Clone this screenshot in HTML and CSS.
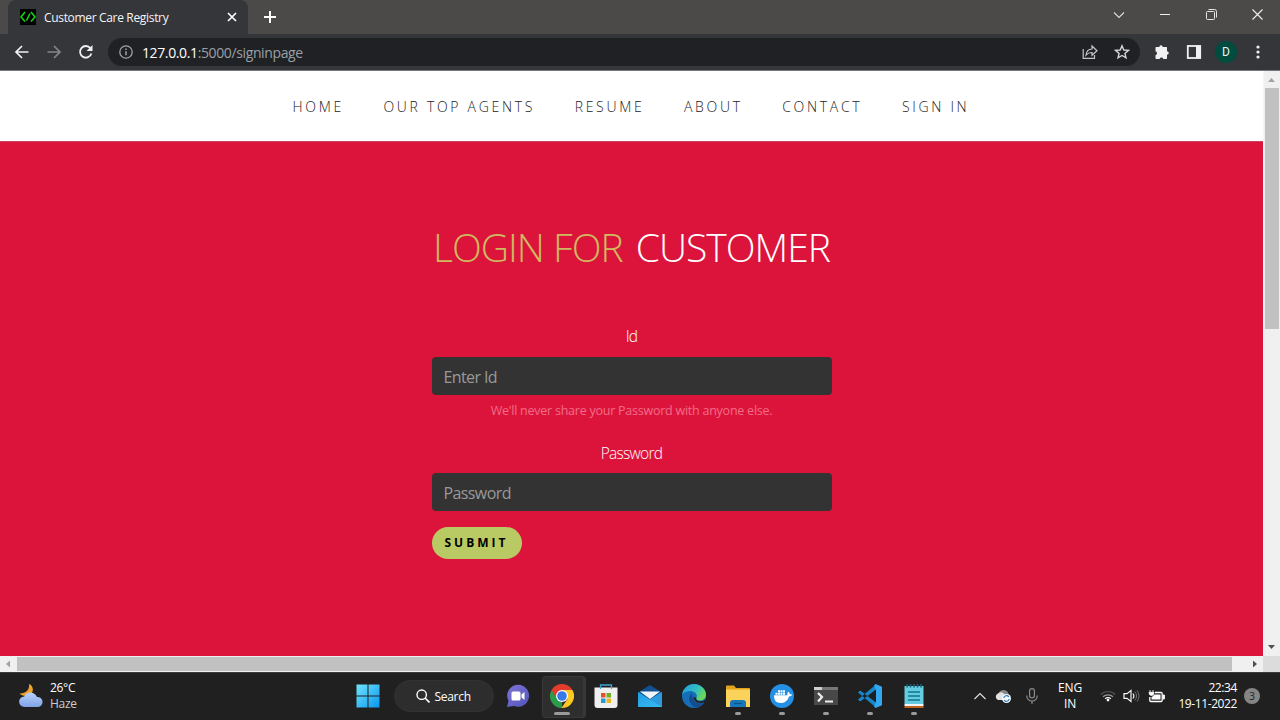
FILE: index.html
```html
<!DOCTYPE html>
<html lang="en">
<head>
<meta charset="utf-8">
<title>Customer Care Registry</title>
<link rel="stylesheet" href="styles.css">
</head>
<body>
<div class="screen">
  <header class="titlebar">
    <div class="tab">
      <svg class="favicon" width="16" height="16" viewBox="0 0 16 16"><rect width="16" height="16" fill="#000"/><path d="M5 3 1 8 5 12.500M11 3 15 8 11 12.500M10 4.500 6.500 11.500" fill="none" stroke="#12d612" stroke-width="1.600"/></svg>
      <span class="tab-title">Customer Care Registry</span>
      <svg class="tab-close" width="10" height="10" viewBox="0 0 10 10"><path d="m1 1 8 8M9 1 1 9" stroke="#fff" stroke-width="1.7"/></svg>
    </div>
    <svg class="new-tab" width="14" height="14" viewBox="0 0 14 14"><path d="M7 1v12M1 7h12" stroke="#fff" stroke-width="2"/></svg>
    <div class="controls">
      <span><svg width="12" height="8" viewBox="0 0 12 8"><path d="m1 1.500 5 5 5-5" fill="none" stroke="#dcdcdb" stroke-width="1.100"/></svg></span>
      <span><svg width="10" height="10" viewBox="0 0 10 10"><path d="M0 4.500h10" stroke="#eee"/></svg></span>
      <span><svg width="11" height="11" viewBox="0 0 11 11"><g fill="none" stroke="#e4e4e4"><rect x=".5" y="2.500" width="8" height="8" rx="1"/><path d="M2.500.5h6a2 2 0 0 1 2 2v6"/></g></svg></span>
      <span><svg width="11" height="11" viewBox="0 0 11 11"><path d="m.5.5 10 10M10.500.5l-10 10" stroke="#eee" stroke-width="1.100"/></svg></span>
    </div>
  </header>

  <div class="toolbar">
    <span class="tool"><svg width="16" height="16" viewBox="0 0 16 16"><path d="M14.500 8H2M8 2 2 8l6 6" fill="none" stroke="#f1f1f1" stroke-width="1.700"/></svg></span>
    <span class="tool"><svg width="16" height="16" viewBox="0 0 16 16"><path d="M1.500 8H14M8 2l6 6-6 6" fill="none" stroke="#85868a" stroke-width="1.700"/></svg></span>
    <span class="tool"><svg width="16" height="16" viewBox="0 0 16 16"><path d="M13.400 9.500A5.800 5.800 0 1 1 12.400 4.200" fill="none" stroke="#f1f1f1" stroke-width="1.800"/><path d="M14.500 1v6H8.500z" fill="#f1f1f1"/></svg></span>
    <div class="omnibox">
      <svg width="14" height="14" viewBox="0 0 14 14"><circle cx="7" cy="7" r="6.200" fill="none" stroke="#a0a3a7" stroke-width="1.300"/><path d="M7 6.200v4M7 3.500v1.500" stroke="#a0a3a7" stroke-width="1.500"/></svg>
      <span class="url"><b>127.0.0.1</b>:5000/signinpage</span>
      <svg class="share" width="16" height="16" viewBox="0 0 16 16"><g fill="none" stroke="#c4c5c8" stroke-width="1.200"><path d="M1.200 5v9.400h11.300V11"/><path d="M4 11.200c.3-3.800 2.400-6 6-6.200V2l5 4.700-5 4.600V8.500C7.500 8.400 5.500 9.300 4 11.200z"/></g></svg>
      <svg class="star" width="16" height="16" viewBox="0 0 16 16"><path d="m8 1.800 1.800 4.200 4.600.4-3.500 3 1.100 4.500L8 11.500 4 13.900l1.100-4.500-3.500-3 4.600-.4z" fill="none" stroke="#d4d5d8" stroke-width="1.400"/></svg>
    </div>
    <span class="tool"><svg width="16" height="16" viewBox="0 0 16 16"><path d="M5.300 3a1.700 1.700 0 0 1 3.400 0H12c.7 0 1 .4 1 1v3.200a1.700 1.700 0 0 1 0 3.500V14c0 .6-.4 1-1 1H9.300a1.900 1.900 0 0 0-3.700 0H2.500c-.6 0-1-.4-1-1v-2.800a2 2 0 0 0 0-3.900V4c0-.6.400-1 1-1z" fill="#f1f1f3"/></svg></span>
    <span class="tool"><svg width="16" height="16" viewBox="0 0 16 16"><rect x="1.800" y="2" width="12.400" height="12" fill="none" stroke="#f1f1f3" stroke-width="1.800"/><path d="M10 1.500h5v13h-5z" fill="#f1f1f3"/></svg></span>
    <span class="tool"><span class="avatar">D</span></span>
    <span class="tool"><svg width="4" height="14" viewBox="0 0 4 14"><g fill="#f1f1f1"><circle cx="2" cy="2" r="1.600"/><circle cx="2" cy="7" r="1.600"/><circle cx="2" cy="12" r="1.600"/></g></svg></span>
  </div>

  <div class="viewport">
    <main class="page">
      <nav class="nav">
        <a>HOME</a><a>OUR TOP AGENTS</a><a>RESUME</a><a>ABOUT</a><a>CONTACT</a><a>SIGN IN</a>
      </nav>
      <section class="login">
        <h1><span class="accent">LOGIN FOR</span> <span class="who">CUSTOMER</span></h1>
        <form class="form">
          <label class="label">Id</label>
          <div class="field">Enter Id</div>
          <small class="hint">We'll never share your Password with anyone else.</small>
          <label class="label label-pass">Password</label>
          <div class="field field-pass">Password</div>
          <button type="button" class="submit">SUBMIT</button>
        </form>
      </section>
    </main>
    <div class="vscroll">
      <svg width="17" height="17" viewBox="0 0 17 17"><path d="m5 11 3.500-4L12 11z" fill="#a3a3a3"/></svg>
      <div class="vthumb"></div>
      <svg class="down" width="17" height="17" viewBox="0 0 17 17"><path d="m5 6 3.500 4L12 6z" fill="#505050"/></svg>
    </div>
  </div>
  <div class="hscroll">
    <svg width="17" height="16" viewBox="0 0 17 16"><path d="M10 4.500 6 8l4 3.500z" fill="#a3a3a3"/></svg>
    <div class="hthumb"></div>
    <svg class="right" width="17" height="16" viewBox="0 0 17 16"><path d="m7 4.500 4 3.500-4 3.500z" fill="#505050"/></svg>
    <div class="corner"></div>
  </div>

  <footer class="taskbar">
    <div class="weather">
      <svg width="26" height="26" viewBox="0 0 26 26"><defs><linearGradient id="cl" x2="0" y2="1"><stop stop-color="#b9d1fb"/><stop offset="1" stop-color="#7ea3e6"/></linearGradient></defs><path d="M11 1c6 2 5 12-3 12-3 0-5-1-6.500-2.500C7 11 12 7 11 1z" fill="#f0a32a"/><path d="M6.500 24a5.300 5.300 0 0 1-.2-10.600A7 7 0 0 1 19 14a5 5 0 0 1 1 10z" fill="url(#cl)"/></svg>
      <div class="weather-text"><span>26°C</span><span class="dim">Haze</span></div>
    </div>
    <div class="apps">
      <span class="app"><svg width="24" height="24" viewBox="0 0 24 24"><defs><linearGradient id="wn" gradientUnits="userSpaceOnUse" x2="24" y2="24"><stop stop-color="#72e6fc"/><stop offset="1" stop-color="#0794ee"/></linearGradient></defs><path d="M.5.5h11v11H.5zM12.500.5h11v11h-11zM.5 12.500h11v11H.5zM12.500 12.500h11v11h-11z" fill="url(#wn)"/></svg></span>
      <div class="search"><svg width="14" height="14" viewBox="0 0 14 14"><circle cx="5.700" cy="5.700" r="4.700" fill="none" stroke="#fff" stroke-width="1.400"/><path d="m9 9 4.500 4.500" stroke="#fff" stroke-width="1.600"/></svg><span>Search</span></div>
      <span class="app"><svg width="24" height="24" viewBox="0 0 24 24"><defs><linearGradient id="ch" x2="1" y2="1"><stop stop-color="#8275d8"/><stop offset="1" stop-color="#5054b8"/></linearGradient></defs><path d="M12.500.8A11 11 0 1 1 8 22L1 23l1.500-6A11 11 0 0 1 12.500.8z" fill="url(#ch)"/><rect x="5.500" y="7.500" width="9" height="9" rx="1.500" fill="#fff"/><path d="m15.500 10.500 3-2.500v8l-3-2.500z" fill="#fff"/></svg></span>
      <span class="app active"><svg width="24" height="24" viewBox="0 0 24 24"><path d="M12 12 12 24A12 12 0 0 1 1.600 6z" fill="#2b9d48"/><path d="M12 6h10.400A12 12 0 0 1 11.500 24l6-9z" fill="#fcc924"/><path d="M1.600 6A12 12 0 0 1 22.400 6H12v6H5z" fill="#e33b2e"/><circle cx="12" cy="12" r="6" fill="#fff"/><circle cx="12" cy="12" r="4.800" fill="#3879e8"/></svg><i class="mark wide"></i></span>
      <span class="app"><svg width="24" height="24" viewBox="0 0 24 24"><path d="M6.500 5V1h11v4" fill="none" stroke="#3da6d0" stroke-width="1.300"/><path d="M.5 3.500h23V21a3 3 0 0 1-3 3h-17a3 3 0 0 1-3-3z" fill="#efefef"/><path d="M6.500 3v2M17.500 3v2" stroke="#3da6d0" stroke-width="1.200"/><path d="M7 9h4.500v4.500H7z" fill="#e85128"/><path d="M12.500 9H17v4.500h-4.500z" fill="#70ae24"/><path d="M7 14.500h4.500V19H7z" fill="#219bd8"/><path d="M12.500 14.500H17V19h-4.500z" fill="#efb622"/></svg></span>
      <span class="app"><svg width="24" height="24" viewBox="0 0 24 24"><defs><linearGradient id="ml" x2="1" y2="1"><stop stop-color="#239de2"/><stop offset="1" stop-color="#38bbf4"/></linearGradient></defs><path d="M0 8.500 12 1l12 7.500v6H0z" fill="#124f91"/><path d="M2 7.500h20L12 15z" fill="#f0f5fa"/><path d="m0 8 12 7.500L24 8v15H0z" fill="url(#ml)"/><path d="m12 15.500 12-7V23z" fill="#2d9bdd"/></svg></span>
      <span class="app"><svg width="24" height="24" viewBox="0 0 24 24"><defs><linearGradient id="eg" x2="1" y2=".5"><stop stop-color="#2298df"/><stop offset=".6" stop-color="#32bec5"/><stop offset="1" stop-color="#68d858"/></linearGradient></defs><circle cx="12" cy="12" r="12" fill="#166eb9"/><path d="M0 11C1 4.500 6 0 12 0c7 0 12 5.500 12 10.500 0 4-3 6-6.500 6-3 0-4-1.200-3.200-2.200C16.500 11 13 6.500 7.500 7 4 7.300 1.500 8.500 0 11z" fill="url(#eg)"/><path d="M10 9c-5 4-3 12 4 14.800C18 23.500 21 21 22.500 18.500 17 21 9.500 18 10 9z" fill="#154d8c"/><path d="M14.300 14.300C13.800 17 19 19 23.500 15.500L22.800 18.200C17 20.500 11.500 17.500 11.500 12.500z" fill="#202020"/></svg></span>
      <span class="app"><svg width="24" height="24" viewBox="0 0 24 24"><path d="M0 2.500q0-1 1-1h7l2 2.500H23q1 0 1 1V23H0z" fill="#e2a31b"/><path d="M0 5.500h24V23H0z" fill="#fbd35a"/><path d="M4 23v-4q0-3 3-3h10q3 0 3 3v4z" fill="#1678bb"/><path d="M8 19.500h8" stroke="#0c5188" stroke-width="1.200"/></svg><i class="mark"></i></span>
      <span class="app"><svg width="24" height="24" viewBox="0 0 24 24"><circle cx="12" cy="12" r="12" fill="#2390e6"/><path d="M4 11.300h13.500c-.4-1.500 0-2.700.8-3.500 1 .7 1.500 1.600 1.500 2.600 1-.1 1.800 0 2.300.4-.5 1.100-1.600 1.600-3 1.600C17.500 17 14.500 19 10.500 19 6.500 19 4 17 4 11.300z" fill="#fff"/><path d="M5.500 8.700h2v2h-2zM8 8.700h2v2H8zM10.500 8.700h2v2h-2zM13 8.700h2v2h-2zM8 6.300h2v2H8zM10.500 6.300h2v2h-2zM13 6.300h2v2h-2z" fill="#fff"/></svg><i class="mark"></i></span>
      <span class="app"><svg width="24" height="24" viewBox="0 0 24 24"><path d="M0 3h24v18H0z" fill="#484848"/><path d="M0 3h24v3H0z" fill="#777"/><path d="M0 3h8v3H0z" fill="#d0d0d0"/><path d="m4 9 4 4-4 4.500M11 17.500h8" fill="none" stroke="#eee" stroke-width="2.200"/></svg><i class="mark"></i></span>
      <span class="app"><svg width="24" height="24" viewBox="0 0 24 24"><path d="M0 8.500 2.200 6.500 18 18.500v5zM0 15.500l2.200 2L18 5.500V.5z" fill="#1787cb"/><path d="m17.500 0 6.500 2.700v18.600L17.500 24 16 22.500 18 18V6l-2-4.500z" fill="#31a8f0"/></svg><i class="mark"></i></span>
      <span class="app"><svg width="24" height="24" viewBox="0 0 24 24"><path d="M2.500 2h19v18h-19z" fill="#62cce1"/><path d="M2.500 20h19v2h-19z" fill="#f5f5f5"/><path d="M2.500 22h19v2h-19z" fill="#b86420"/><path d="M6 8h12M6 12h12M6 16h12" stroke="#16738c" stroke-width="1.300"/><path d="M5 0v3.500M8.500 0v3.500M12 0v3.500M15.500 0v3.500M19 0v3.500" stroke="#19617a" stroke-width="1.500"/></svg><i class="mark"></i></span>
    </div>
    <div class="tray">
      <svg class="up" width="14" height="8" viewBox="0 0 14 8"><path d="m1.500 7 5.500-5.500L12.500 7" fill="none" stroke="#ddd" stroke-width="1.200"/></svg>
      <svg class="cloud" width="18" height="16" viewBox="0 0 18 16"><path d="M5 5a5 5 0 0 1 9.500 1C17 7 17 12 14 12H5z" fill="#858585"/><path d="M4 12a3.500 3.500 0 0 1 0-6.500 4 4 0 0 1 6.500 1L13 12z" fill="#e2e2e2"/><circle cx="12.500" cy="10.500" r="4.500" fill="#f5f9fc"/><path d="M9.800 10a2.800 2.800 0 0 1 5-1.200M15.200 11a2.800 2.800 0 0 1-5 1.200" fill="none" stroke="#2378b5" stroke-width="1.200"/></svg>
      <svg class="mic" width="12" height="16" viewBox="0 0 12 16"><rect x="3.600" y=".6" width="4.800" height="9.400" rx="2.400" fill="none" stroke="#8b8b8b" stroke-width="1.200"/><path d="M.8 7.500v.5a5.200 5.200 0 0 0 10.400 0v-.5M6 13.200V16" fill="none" stroke="#8b8b8b" stroke-width="1.200"/></svg>
      <div class="lang"><span>ENG</span><span>IN</span></div>
      <svg class="wifi" width="16" height="13" viewBox="0 0 16 13"><g fill="none" stroke-width="1.200"><path d="M.8 5.500a10.200 10.200 0 0 1 14.400 0" stroke="#555"/><path d="M3 7.800a7.200 7.200 0 0 1 10 0" stroke="#999"/><path d="M5.200 9.700a4 4 0 0 1 5.600 0" stroke="#fff"/></g><circle cx="8" cy="11" r="1.400" fill="#fff"/></svg>
      <svg class="vol" width="17" height="14" viewBox="0 0 17 14"><path d="M1 4.700h3L8 1.500v11L4 9.300H1z" fill="none" stroke="#f5f5f5" stroke-width="1.200"/><path d="M10 4.500q1.800 2.500 0 5" fill="none" stroke="#eee" stroke-width="1.200"/><path d="M12 2.700q3.200 4.300 0 8.600M14 1.500q4 5.500 0 11" fill="none" stroke="#707070"/></svg>
      <svg class="bat" width="17" height="14" viewBox="0 0 17 14"><path d="M7 3.500h6q1.200 0 1.200 1.200v6.600q0 1.200-1.200 1.200H3q-1.200 0-1.200-1.200V8" fill="none" stroke="#fff" stroke-width="1.300"/><path d="M6.500 5.500H12.500v5H3.500V8.500z" fill="#fff"/><path d="M15 6h1.500v4H15zM1 3.300h5q0 3.200-2.500 3.200T1 3.300zM2 1v2.500M5 1v2.500" fill="#fff" stroke="#fff" stroke-width=".8"/></svg>
      <div class="clock"><span>22:34</span><span class="date">19-11-2022</span></div>
      <span class="count">3</span>
    </div>
  </footer>
</div>
</body>
</html>
```

FILE: styles.css
```css
* { box-sizing: border-box; }
body { margin: 0; font-family: "Open Sans", "Noto Sans", sans-serif; }
svg { display: block; flex: none; }
.screen { width: 1280px; height: 720px; overflow: hidden; display: flex; flex-direction: column; white-space: nowrap; }

.titlebar { height: 34px; flex: none; display: flex; align-items: center; background: #4c4a48; }
.tab { width: 240px; height: 34px; margin-left: 8px; padding: 0 11px 0 12px; border-radius: 8px 8px 0 0; background: #35363a; display: flex; align-items: center; }
.tab-title { margin-left: 8px; font-size: 12px; color: #f4f4f5; letter-spacing: -0.33px; }
.tab-close { margin-left: auto; }
.new-tab { margin-left: 15px; }
.controls { margin-left: auto; height: 29px; display: flex; align-self: flex-start; }
.controls span { width: 46px; display: flex; align-items: center; justify-content: center; }

.toolbar { height: 37px; flex: none; padding: 0 6px; display: flex; align-items: center; background: #35363a; border-bottom: 1px solid #77787b; }
.tool { width: 32px; display: flex; justify-content: center; }
.omnibox { width: 1032px; height: 28px; margin: 0 6px; padding: 0 10px 0 11px; border-radius: 14px; background: #202124; display: flex; align-items: center; }
.url { margin-left: 9px; font-size: 14px; color: #9aa0a6; letter-spacing: -0.38px; }
.url b { font-weight: 400; color: #fff; }
.share { margin-left: auto; }
.star { margin-left: 16px; }
.avatar { width: 22px; height: 22px; border-radius: 50%; background: #004d40; color: #e9f1ef; font: 12px/22px Roboto, sans-serif; text-align: center; }

.viewport { height: 585px; flex: none; display: flex; }
.page { width: 1263px; display: flex; flex-direction: column; background: #dc143c; }
.nav { height: 71px; flex: none; padding: 2px 0 0 292.5px; display: flex; align-items: center; gap: 39.5px; background: #fff; border-bottom: 1px solid #c8455f; }
.nav a { font-size: 14px; font-weight: 300; line-height: 20px; letter-spacing: 2.7px; color: #222; }
.login { padding-top: 75px; display: flex; flex-direction: column; align-items: center; }
h1 { margin: 0; font-size: 39px; font-weight: 300; line-height: 60px; letter-spacing: -1px; color: #fff; }
.accent { color: #cfba5f; }
.who { margin-left: 4px; }
.form { width: 400px; margin-top: 47px; display: flex; flex-direction: column; align-items: center; }
.label { font-size: 15.5px; font-weight: 300; line-height: 24px; letter-spacing: -0.7px; color: #fff; }
.field { width: 400px; height: 38px; margin-top: 9px; padding: 1px 12px 0; border-radius: 4px; background: #333; color: #999; font-size: 16px; line-height: 38px; letter-spacing: -0.6px; }
.hint { margin-top: 6px; font-size: 12.5px; line-height: 20px; letter-spacing: -0.24px; color: #f16d87; }
.label-pass { margin-top: 20px; }
.field-pass { margin-top: 8px; }
.submit { width: 90px; height: 32px; margin-top: 16px; padding: 0; align-self: flex-start; border: 0; border-radius: 16px; background: #b9c964; color: #000; font: 700 12px/32px "Open Sans", sans-serif; letter-spacing: 3px; text-align: center; }

.vscroll { width: 17px; display: flex; flex-direction: column; background: #f0f0f0; border-left: 1px solid #f6f6f6; }
.vthumb { width: 14px; height: 241px; margin-left: 1px; background: #c1c1c1; }
.vscroll .down { margin-top: auto; }
.vscroll svg { margin-left: -1px; }
.hscroll { height: 16px; flex: none; display: flex; align-items: center; background: #f0f0f0; }
.hthumb { width: 1215px; height: 14px; background: #c1c1c1; }
.hscroll .right { margin-left: auto; }
.corner { width: 17px; height: 16px; background: #dcdcdc; }

.taskbar { height: 48px; flex: none; display: flex; align-items: center; background: #202020; border-top: 1px solid #3b3b3b; color: #fff; font-size: 12px; }
.weather { width: 345.5px; padding: 0 0 2px 18px; display: flex; align-items: center; }
.weather-text { margin-left: 6px; display: flex; flex-direction: column; line-height: 16px; letter-spacing: -0.3px; }
.dim { color: #ccc; }
.apps { display: flex; align-items: center; padding-bottom: 1px; }
.app { position: relative; width: 44px; height: 40px; display: flex; align-items: center; justify-content: center; }
.active::before { content: ""; position: absolute; left: 2px; top: 0; width: 40px; height: 40px; border-radius: 4px; background: #2e2e2e; border: 1px solid #383838; border-right-width: 3px; }
.app svg { position: relative; }
.mark { position: absolute; left: 19px; bottom: 1px; width: 6px; height: 3px; border-radius: 2px; background: #9a9a9a; }
.wide { left: 14px; width: 16px; }
.search { width: 100px; height: 32px; margin: 0 2px 0 4px; padding-left: 21px; border-radius: 16px; background: #2d2d2d; border: 1px solid #333; display: flex; align-items: center; gap: 5px; letter-spacing: -0.3px; }
.tray { width: 344px; margin-left: auto; padding: 0 0 2px 37px; display: flex; align-items: center; }
.cloud { margin-left: 7px; }
.mic { margin-left: 14px; }
.lang { width: 30px; margin-left: 17px; display: flex; flex-direction: column; align-items: center; line-height: 16px; letter-spacing: -0.2px; }
.wifi { margin-left: 15px; }
.vol { margin-left: 7px; }
.bat { margin-left: 8px; }
.clock { width: 64px; margin-left: 8px; display: flex; flex-direction: column; align-items: flex-end; line-height: 16px; letter-spacing: -0.4px; }
.count { width: 16px; height: 16px; margin-left: 7px; border-radius: 50%; background: #858585; color: #222; font-size: 10px; line-height: 16px; text-align: center; }
```
